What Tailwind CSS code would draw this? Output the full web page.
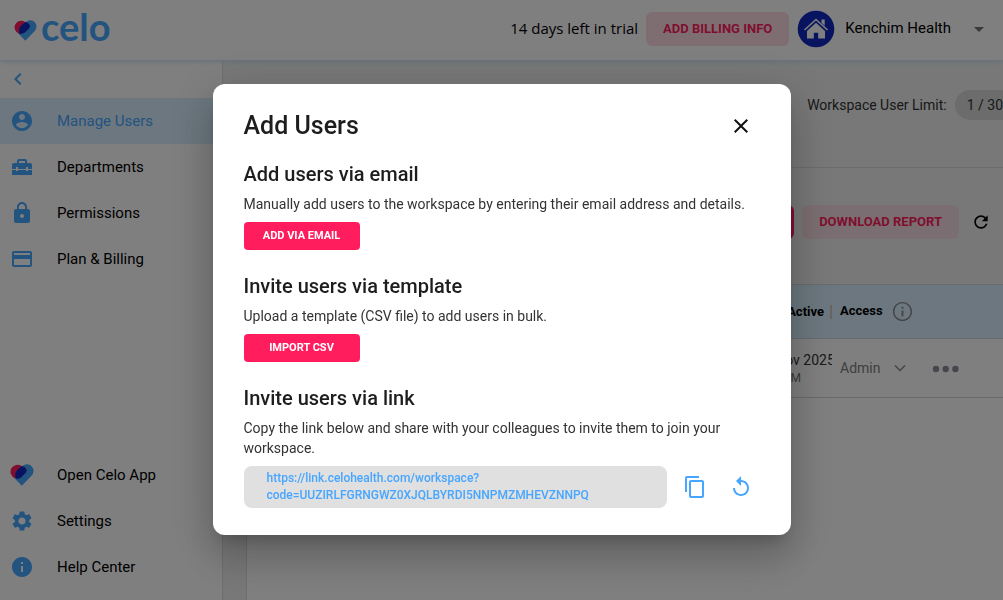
<!DOCTYPE html>
<html lang="en">
<head>
<meta charset="utf-8">
<meta name="viewport" content="width=device-width, initial-scale=1">
<title>Celo – Manage Users</title>
<script src="https://cdn.jsdelivr.net/npm/@tailwindcss/browser@4"></script>
</head>
<body class="h-screen overflow-hidden bg-white font-['Roboto',sans-serif] text-[15px] text-black">
<svg class="hidden" aria-hidden="true">
  <symbol id="heart" viewBox="42 57 69 64">
    <path fill="#47a6ff" d="M76 120 104 91A19 19 0 0 0 78 63L55 88Q54 98 58 102Z"/>
    <path fill="#ff1d5e" d="M57 99A20.500 20.500 0 1 1 79 66Z"/>
    <path fill="#1029be" d="M62 75 72 66Q78 61 84 66L88 71Q93 76 88 82L74 96Q69 100 58 99.500 54 85 62 75Z"/>
  </symbol>
</svg>

<div class="flex h-full flex-col">
  <header class="relative flex h-15 shrink-0 items-center bg-white pr-3 pb-[3px] pl-3.5 shadow-[0_1px_6px_#bcdcf8]">
    <a href="#" class="flex items-center gap-1 text-[#47a6ff]" aria-label="Celo home">
      <svg class="mt-1 h-[21px] w-[23px]" aria-hidden="true"><use href="#heart"/></svg>
      <span class="pb-1.5 font-['Lato',sans-serif] text-[38px] leading-[50px] font-bold">celo</span>
    </a>
    <div class="ml-auto flex items-center">
      <span class="mr-2 font-['Open_Sans',sans-serif]">14 days left in trial</span>
      <button class="h-[34px] rounded-md bg-[#fcdce5] px-[17px] text-[13px] font-bold text-[#ff1d5e]">ADD BILLING INFO</button>
      <button class="ml-2 flex items-center">
        <svg class="size-9.5" viewBox="0 0 38 38" aria-hidden="true">
          <circle cx="19" cy="19" r="18.300" fill="#1029be"/>
          <path fill="none" stroke="#fff" stroke-width="1.600" d="M7.500 20 19 9.500 30.500 20"/>
          <path fill="#fff" d="M19 12.700 28 21V28.500h-6.800v-5.800h-4.400v5.800H10V21ZM24.500 9.500h3.200v6.300l-3.200-3Z"/>
        </svg>
        <span class="ml-2.5">Kenchim Health</span>
        <svg class="ml-4 size-6" viewBox="0 0 24 24" fill="#757575" aria-hidden="true"><path d="m7 10 5 5 5-5z"/></svg>
      </button>
    </div>
  </header>

  <div class="flex min-h-0 flex-1">
    <nav class="flex w-[223px] shrink-0 flex-col border-r border-[#dcdcdc] bg-white" aria-label="Workspace">
      <button class="flex h-[38px] items-center pl-1.5" aria-label="Collapse sidebar">
        <svg class="size-6" viewBox="0 0 24 24" fill="#47a6ff" aria-hidden="true"><path d="M15.410 7.410 14 6l-6 6 6 6 1.410-1.410L10.830 12z"/></svg>
      </button>
      <a href="#" class="flex h-[46px] items-center gap-[23px] bg-[#d9efff] pl-2.5 text-[#47a6ff]" aria-current="page">
        <svg class="size-6" viewBox="0 0 24 24" fill="#47a6ff" aria-hidden="true"><path d="M12 2C6.480 2 2 6.480 2 12s4.480 10 10 10 10-4.480 10-10S17.520 2 12 2m0 3c1.660 0 3 1.340 3 3s-1.340 3-3 3-3-1.340-3-3 1.340-3 3-3m0 14.200c-2.500 0-4.710-1.280-6-3.220.030-1.990 4-3.080 6-3.080 1.990 0 5.970 1.090 6 3.080-1.290 1.940-3.500 3.220-6 3.220"/></svg>
        Manage Users
      </a>
      <a href="#" class="flex h-[46px] items-center gap-[23px] pl-2.5">
        <svg class="size-6" viewBox="0 0 24 24" fill="#47a6ff" aria-hidden="true"><path d="M18 16h-2v-1H8v1H6v-1H2v5h20v-5h-4zM20 8h-3V6c0-1.100-.900-2-2-2H9c-1.100 0-2 .900-2 2v2H4c-1.100 0-2 .900-2 2v4h4v-2h2v2h8v-2h2v2h4v-4c0-1.100-.900-2-2-2m-5 0H9V6h6z"/></svg>
        Departments
      </a>
      <a href="#" class="flex h-[46px] items-center gap-[23px] pl-2.5">
        <svg class="size-6" viewBox="0 0 24 24" fill="#47a6ff" aria-hidden="true"><path d="M18 8h-1V6c0-2.760-2.240-5-5-5S7 3.240 7 6v2H6c-1.100 0-2 .900-2 2v10c0 1.100.900 2 2 2h12c1.100 0 2-.900 2-2V10c0-1.100-.900-2-2-2m-6 9c-1.100 0-2-.900-2-2s.900-2 2-2 2 .900 2 2-.900 2-2 2m3.100-9H8.900V6c0-1.710 1.390-3.100 3.100-3.100s3.100 1.390 3.100 3.100z"/></svg>
        Permissions
      </a>
      <a href="#" class="flex h-[46px] items-center gap-[23px] pl-2.5">
        <svg class="size-6" viewBox="0 0 24 24" fill="#47a6ff" aria-hidden="true"><path d="M20 4H4c-1.110 0-1.990.890-1.990 2L2 18c0 1.110.890 2 2 2h16c1.110 0 2-.890 2-2V6c0-1.110-.890-2-2-2m0 14H4v-6h16zm0-10H4V6h16z"/></svg>
        Plan &amp; Billing
      </a>
      <a href="#" class="mt-auto flex h-[46px] items-center gap-[23px] pl-2.5">
        <svg class="h-5.5 w-6" aria-hidden="true"><use href="#heart"/></svg>
        Open Celo App
      </a>
      <a href="#" class="flex h-[46px] items-center gap-[23px] pl-2.5">
        <svg class="size-6" viewBox="0 0 24 24" fill="#47a6ff" aria-hidden="true"><path d="M19.140 12.940c.040-.300.060-.610.060-.940 0-.320-.020-.640-.070-.940l2.030-1.580c.180-.140.230-.410.120-.610l-1.920-3.320c-.120-.220-.370-.290-.590-.220l-2.390.960c-.500-.380-1.030-.700-1.620-.940l-.360-2.540c-.040-.240-.240-.410-.480-.410h-3.840c-.240 0-.430.170-.470.410l-.360 2.540c-.590.240-1.130.570-1.620.940l-2.390-.960c-.220-.080-.470 0-.590.220L2.740 8.870c-.120.210-.080.470.120.610l2.030 1.580c-.050.300-.090.630-.090.940s.020.640.070.940l-2.030 1.580c-.180.140-.230.410-.120.610l1.920 3.320c.120.220.370.290.590.220l2.390-.960c.500.380 1.030.700 1.620.940l.360 2.540c.050.240.240.410.480.410h3.840c.240 0 .440-.170.470-.410l.360-2.540c.590-.240 1.130-.560 1.620-.940l2.390.960c.220.080.470 0 .590-.220l1.920-3.320c.120-.220.070-.470-.120-.610zM12 15.600c-1.980 0-3.600-1.620-3.600-3.600s1.620-3.600 3.600-3.600 3.600 1.620 3.600 3.600-1.620 3.600-3.600 3.600"/></svg>
        Settings
      </a>
      <a href="#" class="mb-2.5 flex h-[46px] items-center gap-[23px] pl-2.5">
        <svg class="size-6" viewBox="0 0 24 24" fill="#47a6ff" aria-hidden="true"><path d="M12 2C6.480 2 2 6.480 2 12s4.480 10 10 10 10-4.480 10-10S17.520 2 12 2m1 15h-2v-6h2zm0-8h-2V7h2z"/></svg>
        Help Center
      </a>
    </nav>

    <main class="flex min-w-0 flex-1 flex-col overflow-hidden bg-[#f1f1f1] pl-[23px]">
      <div class="flex h-[108px] shrink-0 justify-end border-b border-[#d8d8d8] pt-[30px]">
        <span class="flex h-[30px] items-center gap-2 text-sm text-[#333]">Workspace User Limit:
          <span class="-mr-3 flex h-[30px] items-center rounded-full bg-[#d8d8d8] px-3">1 / 30</span>
        </span>
      </div>
      <div class="flex min-h-0 flex-1 flex-col border-l border-[#dcdcdc]">
        <div class="flex h-[116px] shrink-0 items-center justify-end pr-3 pb-2">
          <button class="mr-2 h-[34px] w-28 rounded-md bg-[#ff1d5e]" aria-label="Add users"></button>
          <button class="mr-3 h-[34px] rounded-md bg-[#f6dde4] px-[17px] text-[13px] font-bold text-[#ff1d5e]">DOWNLOAD REPORT</button>
          <button aria-label="Refresh">
            <svg class="size-5" viewBox="0 0 24 24" fill="#000" aria-hidden="true"><path d="M17.650 6.350C16.200 4.900 14.210 4 12 4c-4.420 0-7.990 3.580-7.990 8s3.570 8 7.990 8c3.730 0 6.840-2.550 7.730-6h-2.080c-.820 2.330-3.040 4-5.650 4-3.310 0-6-2.690-6-6s2.690-6 6-6c1.660 0 3.140.690 4.220 1.780L13 11h7V4z"/></svg>
          </button>
        </div>
        <div class="min-h-0 flex-1 bg-white">
          <table class="w-full table-fixed border-collapse text-left text-sm">
            <thead>
              <tr class="h-[54px] border-y border-[#d5d5d5] bg-[#d9efff] text-[13px]">
                <td></td>
                <th class="w-[84px] font-bold whitespace-nowrap"><span class="block border-r-2 border-[#d0ccc8] pr-1.5 text-right leading-3.5">Last Active</span></th>
                <th class="w-[84px] pl-2 font-bold">
                  <span class="flex items-center gap-2">Access
                    <svg class="size-[23px] shrink-0" viewBox="0 0 24 24" fill="#8a8a8a" aria-hidden="true"><path d="M11 17h2v-6h-2zm1-15C6.480 2 2 6.480 2 12s4.480 10 10 10 10-4.480 10-10S17.520 2 12 2m0 18.500a8.500 8.500 0 1 1 0-17 8.500 8.500 0 0 1 0 17M11 9h2V7h-2z"/></svg>
                  </span>
                </th>
                <td class="w-[87px]"></td>
              </tr>
            </thead>
            <tbody>
              <tr class="h-[59px] border-b border-[#d5d5d5]">
                <td></td>
                <td class="overflow-hidden whitespace-nowrap">
                  <span class="block pl-2 leading-5 text-[#333]">14 Nov 2025</span>
                  <span class="block pr-[31px] text-right text-xs leading-4 text-[#777]">10:24 PM</span>
                </td>
                <td class="pl-2">
                  <button class="flex items-center gap-2 text-[#808080]">Admin
                    <svg class="size-6" viewBox="0 0 24 24" fill="none" stroke="#8a8a8a" stroke-width="1.500" aria-hidden="true"><path d="m7 9.500 5 5 5-5"/></svg>
                  </button>
                </td>
                <td class="pl-4">
                  <button aria-label="More actions"><svg class="block h-2 w-7" viewBox="0 0 28 8" fill="#8b8f99" aria-hidden="true"><circle cx="4" cy="4" r="3.200"/><circle cx="13.700" cy="4" r="3.200"/><circle cx="23.400" cy="4" r="3.200"/></svg></button>
                </td>
              </tr>
            </tbody>
          </table>
        </div>
      </div>
    </main>
  </div>
</div>

<div class="fixed inset-0 flex items-center justify-center bg-black/50 pt-[19px] text-[#1d1d1d]">
  <section role="dialog" aria-modal="true" aria-labelledby="dialog-title" class="w-full max-w-[578px] rounded-xl bg-white px-[31px] pt-6 pb-[27px] shadow-[0_11px_15px_-7px_rgba(0,0,0,0.2),0_24px_38px_3px_rgba(0,0,0,0.14),0_9px_46px_8px_rgba(0,0,0,0.12)]">
    <div class="flex items-center justify-between pr-px">
      <h1 id="dialog-title" class="text-[25px] leading-9 font-medium">Add Users</h1>
      <button class="p-1.5" aria-label="Close">
        <svg class="size-6" viewBox="0 0 24 24" fill="#111" aria-hidden="true"><path d="M19 6.410 17.590 5 12 10.590 6.410 5 5 6.410 10.590 12 5 17.590 6.410 19 12 13.410 17.590 19 19 17.590 13.410 12z"/></svg>
      </button>
    </div>
    <h2 class="mt-4 text-xl leading-7 font-medium">Add users via email</h2>
    <p class="mt-1.5 mb-2 text-sm leading-5 text-[#333]">Manually add users to the workspace by entering their email address and details.</p>
    <button class="block h-7 w-[116px] rounded bg-[#ff1d5e] text-[11px] font-bold text-white">ADD VIA EMAIL</button>
    <h2 class="mt-[22px] text-xl leading-7 font-medium">Invite users via template</h2>
    <p class="mt-1.5 mb-2 text-sm leading-5 text-[#333]">Upload a template (CSV file) to add users in bulk.</p>
    <button class="block h-7 w-[116px] rounded bg-[#ff1d5e] text-[11px] font-bold text-white">IMPORT CSV</button>
    <h2 class="mt-[22px] text-xl leading-7 font-medium">Invite users via link</h2>
    <p class="mt-1.5 mb-2 text-sm leading-5 text-[#333]">Copy the link below and share with your colleagues to invite them to join your workspace.</p>
    <div class="flex items-center pr-px">
      <div class="min-w-0 flex-1 rounded-lg bg-[#e0e0e0] px-[23px] py-1 text-xs leading-[17px] text-[#47a6ff]">
        <a href="#" class="font-medium">https://link.celohealth.com/workspace?<br>code=UUZIRLFGRNGWZ0XJQLBYRDI5NNPMZMHEVZNNPQ</a>
      </div>
      <button class="ml-4 shrink-0" aria-label="Copy link">
        <svg class="size-6" viewBox="0 0 24 24" fill="#47a6ff" aria-hidden="true"><path d="M16 1H4c-1.100 0-2 .900-2 2v14h2V3h12zm3 4H8c-1.100 0-2 .900-2 2v14c0 1.100.900 2 2 2h11c1.100 0 2-.900 2-2V7c0-1.100-.900-2-2-2m0 16H8V7h11z"/></svg>
      </button>
      <button class="mr-1.5 ml-[22px] shrink-0" aria-label="Reset link">
        <svg class="size-6" viewBox="0 0 24 24" fill="#47a6ff" aria-hidden="true"><path d="M12 5V1L7 6l5 5V7c3.310 0 6 2.690 6 6s-2.690 6-6 6-6-2.690-6-6H4c0 4.420 3.580 8 8 8s8-3.580 8-8-3.580-8-8-8"/></svg>
      </button>
    </div>
  </section>
</div>
</body>
</html>
